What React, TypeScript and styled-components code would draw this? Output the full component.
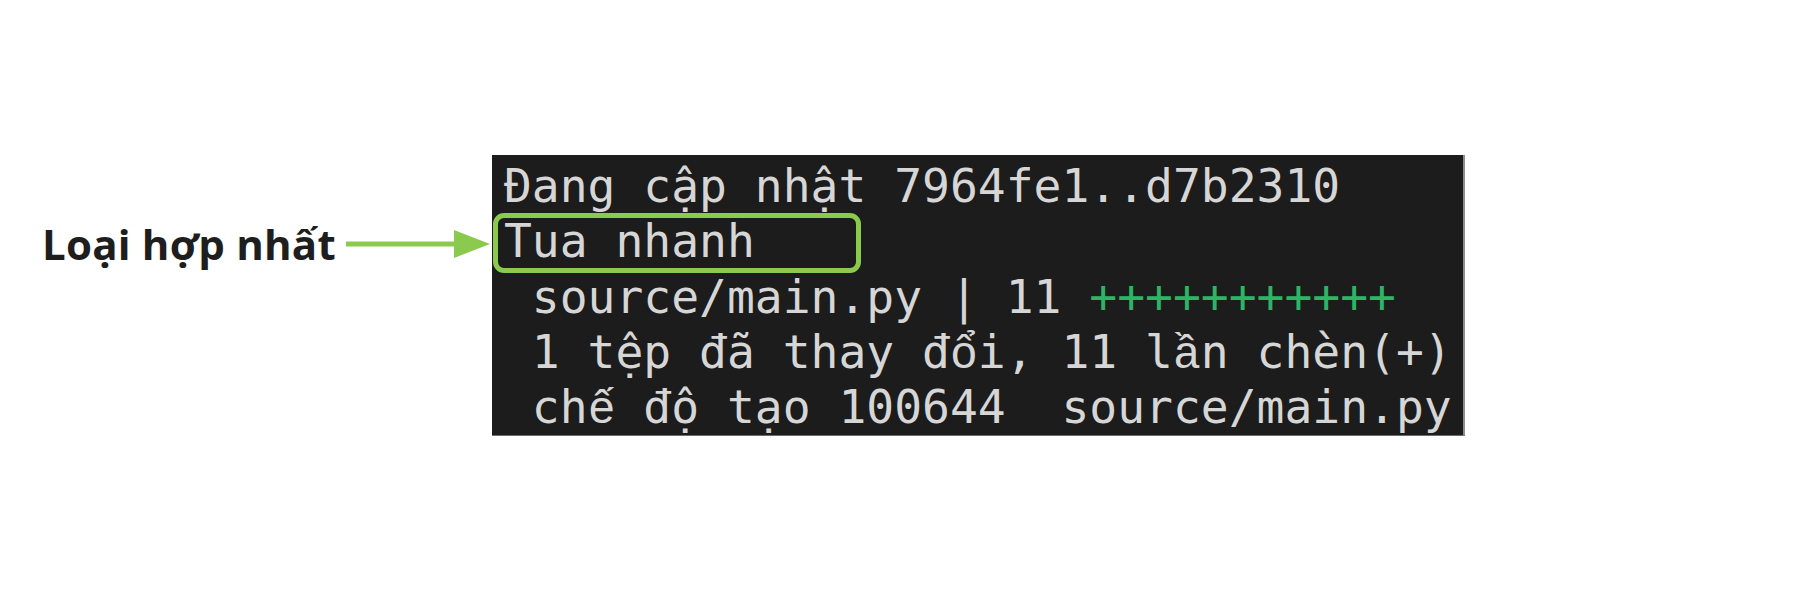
import React from "react";
import styled, { createGlobalStyle } from "styled-components";

const Global = createGlobalStyle`
  html, body { margin: 0; padding: 0; background: #ffffff; }
  body { width: 1815px; height: 592px; overflow: hidden; }
`;

const Page = styled.div`
  box-sizing: border-box;
  width: 1815px;
  height: 592px;
  background: #ffffff;
  display: flex;
  align-items: flex-start;
  padding: 155px 0 0 42px;
`;

const Annotation = styled.div`
  box-sizing: border-box;
  width: 450px;
  display: flex;
  align-items: center;
  justify-content: space-between;
  padding-right: 2px;
  margin-top: 61px;
  height: 56px;
`;

const Label = styled.span`
  font-family: "Open Sans", "Noto Sans", sans-serif;
  font-weight: 700;
  font-size: 42px;
  line-height: 56px;
  letter-spacing: 0.2px;
  color: #1e1e1e;
  white-space: nowrap;
`;

const ArrowSvg = styled.svg`
  display: block;
  flex: none;
`;

const Terminal = styled.div`
  box-sizing: border-box;
  width: 973px;
  height: 281px;
  background: #1c1c1c;
  border-right: 2px solid #8c8c8c;
  border-bottom: 1px solid #6c6c6c;
  padding: 4px 0 0 12px;
  font-family: "DejaVu Sans Mono", "Liberation Mono", monospace;
  font-size: 46.3px;
  line-height: 55.3px;
  color: #d6d6d6;
`;

const Line = styled.div`
  position: relative;
  white-space: pre;
  height: 55.3px;
`;

const Highlight = styled.div`
  position: absolute;
  left: -11px;
  top: -1px;
  width: 368px;
  height: 60px;
  box-sizing: border-box;
  border: 5px solid #8cc94f;
  border-radius: 11px;
  pointer-events: none;
`;

const Plus = styled.span`
  color: #2db565;
`;

const Glyph = styled.span`
  font-family: "Liberation Mono", monospace;
  font-size: 46.4px;
`;

const Arrow = () => (
  <ArrowSvg width="144" height="30" viewBox="0 0 144 30">
    <rect x="0" y="12.5" width="112" height="5" fill="#8cc94f" />
    <polygon points="108,1 144,15 108,29" fill="#8cc94f" />
  </ArrowSvg>
);

export default function App() {
  return (
    <>
      <Global />
      <Page>
        <Annotation>
          <Label>Loại hợp nhất</Label>
          <Arrow />
        </Annotation>
        <Terminal>
          <Line>Đang cập nhật 7964fe1..d7b2310</Line>
          <Line>
            Tua nhanh
            <Highlight />
          </Line>
          <Line>
            {" source/main.py | 11 "}
            <Plus>+++++++++++</Plus>
          </Line>
          <Line>
            {" 1 tệp đã thay đ"}
            <Glyph>ổ</Glyph>
            {"i, 11 l"}
            <Glyph>ầ</Glyph>
            {"n chèn(+)"}
          </Line>
          <Line>
            {" ch"}
            <Glyph>ế</Glyph>
            {" độ tạo 100644  source/main.py"}
          </Line>
        </Terminal>
      </Page>
    </>
  );
}
